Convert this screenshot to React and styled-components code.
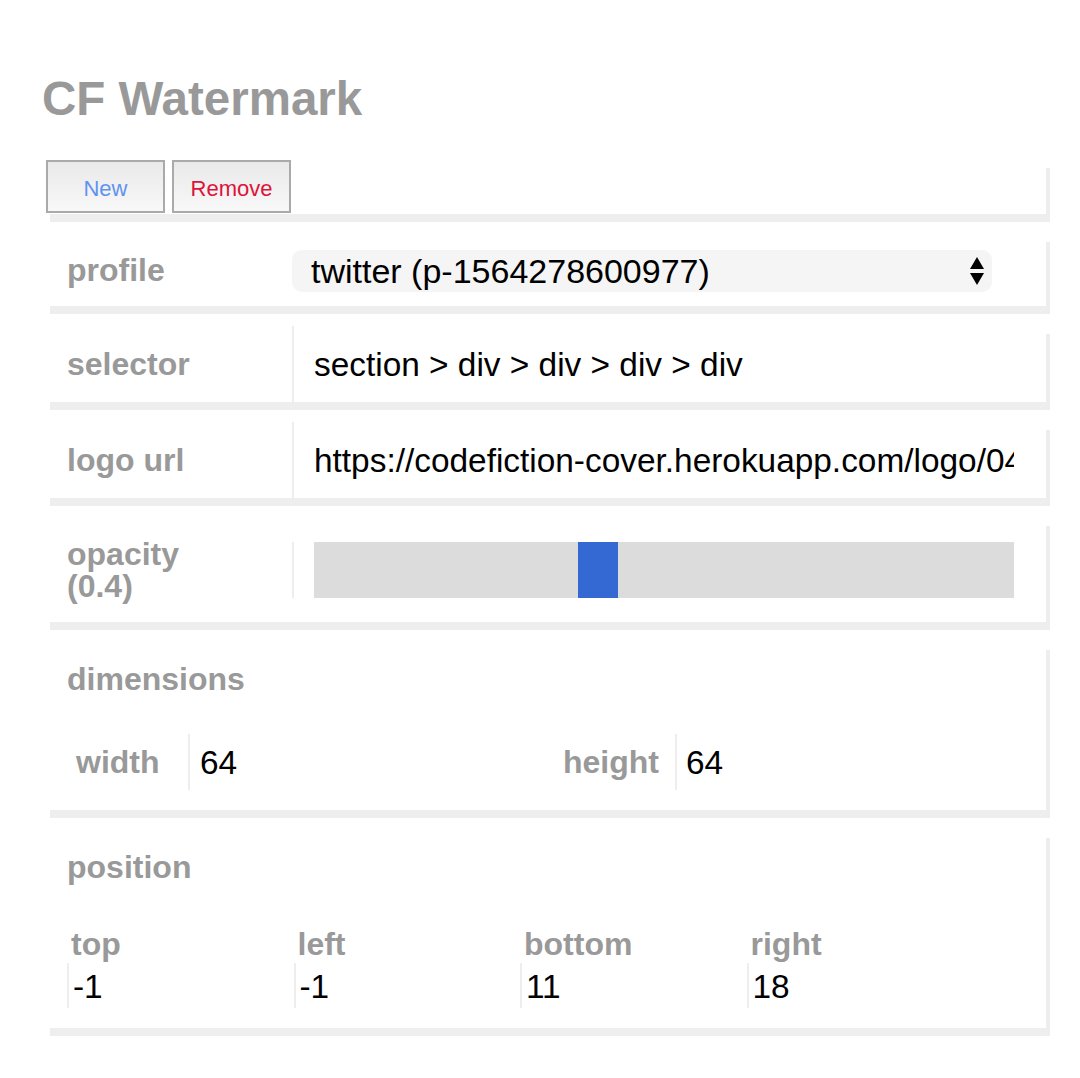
import React from 'react'
import styled, { createGlobalStyle } from 'styled-components'

const GlobalStyle = createGlobalStyle`
  body {
    margin: 0;
    background: #fff;
    font-family: "Liberation Sans", Arial, Helvetica, sans-serif;
  }
`

const Page = styled.div`
  padding: 72px 34px 40px 46px;
`

const Title = styled.h1`
  margin: 0 0 34px -4px;
  font-size: 47.5px;
  line-height: 54px;
  font-weight: bold;
  color: #999;
`

const Card = styled.div`
  width: 1000px;
  box-sizing: border-box;
  background: #fff;
  box-shadow: 4px 8px 0 #eee;
  margin-bottom: 20px;
`

const Row = styled(Card)`
  display: flex;
  align-items: center;
`

const Toolbar = styled(Card)`
  display: flex;
  gap: 7px;
  height: 54px;
`

const Button = styled.button`
  width: 119px;
  height: 53px;
  border: 2px solid #aaa;
  background: linear-gradient(#e9e9e9, #f8f8f8);
  font-family: "Liberation Sans", Arial, sans-serif;
  font-size: 22px;
  color: ${({ $tone }) => ($tone === 'danger' ? 'crimson' : '#5f93ef')};
  padding: 4px 0 0;
`

const Label = styled.div`
  width: 246px;
  box-sizing: border-box;
  padding: 0 40px 0 21px;
  font-size: 32px;
  line-height: 1;
  font-weight: bold;
  color: #999;
`

const TextInput = styled.input`
  width: 742px;
  height: 76px;
  box-sizing: border-box;
  border: 0;
  border-left: 2px solid #eee;
  padding: 2px 20px 0;
  font-family: "Liberation Sans", Arial, sans-serif;
  font-size: 33.4px;
  color: #000;
  background: transparent;
  outline: none;
`

const SelectBox = styled.div`
  width: 700px;
  height: 42px;
  margin: 16px 0 14px;
  box-sizing: border-box;
  padding: 0 7px 0 19px;
  display: flex;
  align-items: center;
  background: #f5f5f5;
  border-radius: 10px;
`

const Select = styled.select`
  flex: 1;
  appearance: none;
  border: 0;
  background: transparent;
  padding: 0;
  font-family: "Liberation Sans", Arial, sans-serif;
  font-size: 34px;
  color: #000;
  outline: none;
`

const SliderCell = styled.div`
  margin: 24px 0;
  padding: 0 20px;
  border-left: 2px solid #eee;
  display: flex;
`

const Range = styled.input`
  appearance: none;
  -webkit-appearance: none;
  width: 700px;
  height: 56px;
  margin: 0;
  background: #dcdcdc;
  outline: none;

  &::-webkit-slider-thumb {
    -webkit-appearance: none;
    width: 40px;
    height: 56px;
    background: #3469d4;
    border: 0;
  }
`

const Group = styled(Card)`
  padding: 19px 21px 20px;
`

const Heading = styled.div`
  font-size: 32px;
  line-height: 37px;
  font-weight: bold;
  color: #999;
`

const DimGrid = styled.div`
  margin-top: 36px;
  display: grid;
  grid-template-columns: 121px 358px 129px 1fr;
  align-items: center;
`

const DimLabel = styled.div`
  padding-left: ${({ $pad }) => $pad}px;
  font-size: 32px;
  font-weight: bold;
  color: #999;
`

const NumInput = styled.input`
  height: ${({ $h }) => $h}px;
  width: 100%;
  box-sizing: border-box;
  border: 0;
  border-left: 2px solid #eee;
  padding: 2px 0 0 ${({ $pad }) => $pad}px;
  font-family: "Liberation Sans", Arial, sans-serif;
  font-size: 33.4px;
  color: #000;
  background: transparent;
  outline: none;
`

const PosGrid = styled.div`
  margin-top: 40px;
  display: grid;
  grid-template-columns: repeat(4, 226.5px);
`

const PosField = styled.div`
  display: flex;
  flex-direction: column;
`

const PosLabel = styled.div`
  padding-left: 4px;
  font-size: 32px;
  line-height: 37px;
  font-weight: bold;
  color: #999;
`

const Arrows = () => (
  <svg width="16" height="30" viewBox="0 0 16 30">
    <path d="M8 1 L15 13 L1 13 Z" fill="#000" />
    <path d="M1 17 L15 17 L8 29 Z" fill="#000" />
  </svg>
)

const position = [
  { name: 'top', value: '-1' },
  { name: 'left', value: '-1' },
  { name: 'bottom', value: '11' },
  { name: 'right', value: '18' },
]

export default function App() {
  return (
    <>
      <GlobalStyle />
      <Page>
        <Title>CF Watermark</Title>

        <Toolbar>
          <Button>New</Button>
          <Button $tone="danger">Remove</Button>
        </Toolbar>

        <Row>
          <Label>profile</Label>
          <SelectBox>
            <Select defaultValue="p-1564278600977">
              <option value="p-1564278600977">twitter (p-1564278600977)</option>
            </Select>
            <Arrows />
          </SelectBox>
        </Row>

        <Row>
          <Label>selector</Label>
          <TextInput readOnly value="section > div > div > div > div" />
        </Row>

        <Row>
          <Label>logo url</Label>
          <TextInput
            readOnly
            value="https://codefiction-cover.herokuapp.com/logo/04.png"
          />
        </Row>

        <Row>
          <Label>opacity (0.4)</Label>
          <SliderCell>
            <Range type="range" min="0" max="1" step="0.1" defaultValue="0.4" />
          </SliderCell>
        </Row>

        <Group>
          <Heading>dimensions</Heading>
          <DimGrid>
            <DimLabel $pad={9}>width</DimLabel>
            <NumInput readOnly value="64" $h={56} $pad={10} />
            <DimLabel $pad={17}>height</DimLabel>
            <NumInput readOnly value="64" $h={56} $pad={9} />
          </DimGrid>
        </Group>

        <Group>
          <Heading>position</Heading>
          <PosGrid>
            {position.map((p) => (
              <PosField key={p.name}>
                <PosLabel>{p.name}</PosLabel>
                <NumInput readOnly value={p.value} $h={45} $pad={4} />
              </PosField>
            ))}
          </PosGrid>
        </Group>
      </Page>
    </>
  )
}
